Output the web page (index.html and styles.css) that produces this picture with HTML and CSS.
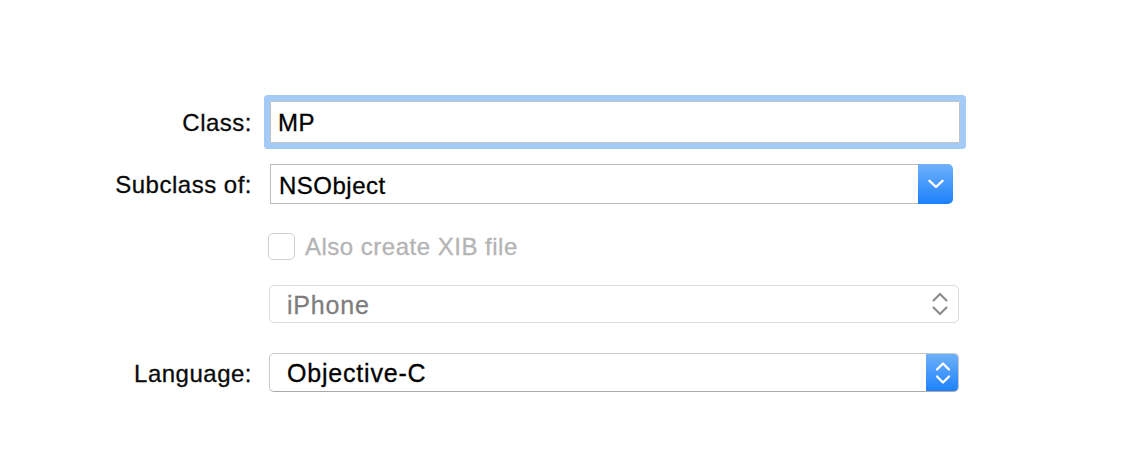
FILE: index.html
```html
<!DOCTYPE html>
<html>
<head>
<meta charset="utf-8">
<link rel="stylesheet" href="styles.css">
</head>
<body>
<div class="form">
  <div class="row row-class">
    <div class="lbl">Class:</div>
    <div class="textfield">MP</div>
  </div>
  <div class="row row-sub">
    <div class="lbl">Subclass of:</div>
    <div class="combo">
      <div class="combo-text">NSObject</div>
      <div class="combo-btn">
        <svg width="16" height="10" viewBox="0 0 16 10"><path d="M1.5 1.8 L8 8 L14.5 1.8" fill="none" stroke="#fff" stroke-width="2.4" stroke-linecap="round" stroke-linejoin="round"/></svg>
      </div>
    </div>
  </div>
  <div class="row row-check">
    <div class="lbl"></div>
    <div class="check">
      <span class="box"></span>
      <span class="check-text">Also create XIB file</span>
    </div>
  </div>
  <div class="row row-device">
    <div class="lbl"></div>
    <div class="popup disabled">
      <div class="popup-text">iPhone</div>
      <div class="popup-arrows">
        <svg width="18" height="26" viewBox="0 0 18 26"><path d="M2.5 9.5 L9 3 L15.5 9.5 M2.5 16.5 L9 23 L15.5 16.5" fill="none" stroke="#8e8e8e" stroke-width="2.2" stroke-linecap="round" stroke-linejoin="round"/></svg>
      </div>
    </div>
  </div>
  <div class="row row-lang">
    <div class="lbl">Language:</div>
    <div class="popup active">
      <div class="popup-text">Objective-C</div>
      <div class="popup-arrows blue">
        <svg width="18" height="26" viewBox="0 0 18 26"><path d="M3 9.5 L9 3.5 L15 9.5 M3 16.5 L9 22.5 L15 16.5" fill="none" stroke="#fff" stroke-width="2.3" stroke-linecap="round" stroke-linejoin="round"/></svg>
      </div>
    </div>
  </div>
</div>
</body>
</html>
```
FILE: styles.css
```css
* { box-sizing: border-box; }
html, body { margin: 0; padding: 0; background: #ffffff; }
body {
  width: 1144px;
  height: 450px;
  overflow: hidden;
  font-family: "Liberation Sans", Arial, sans-serif;
  color: #111;
}
.form { padding-top: 101px; }
.row {
  display: grid;
  grid-template-columns: 252px 1fr;
  align-items: center;
}
.lbl {
  text-align: right;
  font-size: 24px;
  letter-spacing: 0.5px;
  color: #0a0a0a;
  -webkit-text-stroke: 0.3px #0a0a0a;
  padding-top: 2px;
}
.row-class { height: 42px; }
.row-sub { height: 40px; margin-top: 21px; }
.row-check { height: 27px; margin-top: 28px; }
.row-device { height: 38px; margin-top: 26px; }
.row-lang { height: 39px; margin-top: 30px; }

.textfield {
  margin-left: 18px;
  width: 690px;
  height: 42px;
  border: 1px solid #c2c2c2;
  border-radius: 1px;
  box-shadow: 0 0 0 6px #a4cbf8;
  font-size: 24px;
  letter-spacing: 0.5px;
  padding-left: 7px;
  padding-top: 2px;
  display: flex;
  align-items: center;
  color: #000;
  -webkit-text-stroke: 0.3px #000;
}

.combo {
  margin-left: 18px;
  width: 683px;
  height: 40px;
  display: flex;
}
.combo-text {
  flex: 1;
  border: 1px solid #bcbcbc;
  border-right: none;
  font-size: 24px;
  letter-spacing: 0.5px;
  padding-left: 8px;
  padding-top: 4px;
  display: flex;
  align-items: center;
  color: #000;
  -webkit-text-stroke: 0.3px #000;
}
.combo-btn {
  width: 35px;
  border-radius: 0 5px 5px 0;
  background: linear-gradient(#6fb2fb, #1c80fb);
  display: flex;
  align-items: center;
  justify-content: center;
}

.check {
  margin-left: 16px;
  display: flex;
  align-items: center;
}
.box {
  width: 27px;
  height: 27px;
  border: 1px solid #d0d0d0;
  border-radius: 5px;
  background: #fff;
}
.check-text {
  margin-left: 10px;
  font-size: 24px;
  letter-spacing: 0.5px;
  color: #b4b4b4;
  -webkit-text-stroke: 0.3px #b4b4b4;
  padding-top: 1px;
}

.popup {
  margin-left: 17px;
  width: 690px;
  border-radius: 5px;
  display: flex;
  overflow: hidden;
}
.popup.disabled {
  height: 38px;
  border: 1px solid #dcdcdc;
}
.popup.active {
  height: 39px;
  border: 1px solid #c8c8c8;
  border-bottom-color: #aaaaaa;
}
.popup-text {
  flex: 1;
  padding-left: 17px;
  padding-top: 2px;
  font-size: 25px;
  letter-spacing: 0.8px;
  display: flex;
  align-items: center;
}
.disabled .popup-text { color: #7e7e7e; -webkit-text-stroke: 0.3px #7e7e7e; }
.active .popup-text { color: #000; -webkit-text-stroke: 0.3px #000; }
.popup-arrows {
  width: 34px;
  display: flex;
  align-items: center;
  justify-content: center;
  padding-right: 2px;
}
.popup-arrows.blue {
  width: 33px;
  margin: -1px -1px -1px 0;
  background: linear-gradient(#6fb2fb, #1c80fb);
  padding-right: 0;
}
```
